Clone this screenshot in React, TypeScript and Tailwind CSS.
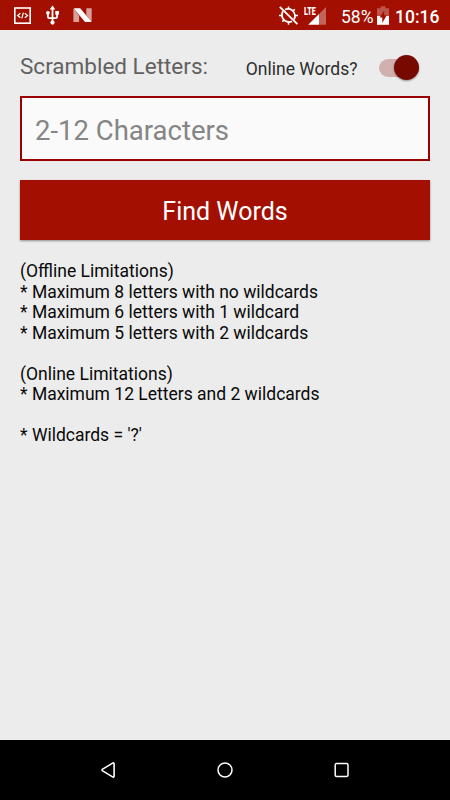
import { useState } from "react";

function StatusBar() {
  return (
    <header className="flex h-[30px] shrink-0 items-center bg-[#a31001] text-white">
      <svg className="ml-[14px] h-[30px] w-[17px]" viewBox="14 0 17 30" fill="none" stroke="currentColor">
        <rect x="14.8" y="8" width="15.4" height="15.2" strokeWidth="1.6" />
        <path d="M20.4 13.2l-2.8 2.3 2.8 2.3M24.8 13.2l2.8 2.3-2.8 2.3M23.4 12.6l-1.6 5.8" strokeWidth="1.2" />
      </svg>
      <svg className="ml-[15px] h-[30px] w-[14px]" viewBox="46 0 14 30" fill="none" stroke="currentColor" strokeWidth="1.8">
        <path d="M52.5 9v13M47.9 13v3.6q0 1.6 1.6 1.6h6q1.6 0 1.6-1.6V13" />
        <path d="M52.5 5.4l2.8 4h-5.6z" fill="currentColor" stroke="none" />
        <circle cx="52.5" cy="22.6" r="2.1" fill="currentColor" stroke="none" />
        <circle cx="47.9" cy="12.8" r="1.9" fill="currentColor" stroke="none" />
        <path d="M55.3 11h3.7v3.7h-3.7z" fill="currentColor" stroke="none" />
      </svg>
      <svg className="ml-[13px] h-[30px] w-[20px]" viewBox="73 0 20 30" fill="currentColor">
        <path d="M73.4 22V9.4q0-.6.5-.9l5.2 7.2V22zM86.3 8.2h5.4v12.6q0 .6-.4.9l-5-6.8z" opacity=".6" />
        <path d="M73.8 8.6q.3-.4 1-.4h5.4L91.4 21.4q-.3.6-1 .6H85z" />
      </svg>
      <svg className="ml-auto h-[30px] w-[21px]" viewBox="278 0 21 30" fill="none" stroke="currentColor" strokeWidth="1.8">
        <path d="M279.8 6.8l17.6 17.4" />
        <path d="M285 9.6q3.7-1.8 7 .5 2.8 2.1 3 5.4.1 2-1 4M292 21.3q-3.8 1.6-7-.5-2.9-2-3.1-5.3-.1-2.2 1-4.2" />
        <path d="M288.5 6.4v2.4M288.5 22v2.8M279 15.5h3M295 15.5h3M294.8 9.2l-1.9 1.9M282.3 21.6l1.9-1.9" strokeWidth="1.5" />
      </svg>
      <div className="relative ml-[4px] h-[30px] w-[24px]">
        <svg className="h-[30px] w-[24px]" viewBox="303 0 24 30" fill="currentColor">
          <path d="M319 14l7-7v17.7h-7z" opacity=".35" />
          <path d="M308.2 24.7H319V13.9z" />
        </svg>
        <span className="absolute left-[1px] top-[6px] origin-left scale-x-[.68] text-[10.5px] font-black leading-[11px]">LTE</span>
      </div>
      <span className="ml-[14px] w-[36px] pt-[3px] text-[17.5px] leading-[30px]">58%</span>
      <svg className="h-[30px] w-[13px]" viewBox="377 0 13 30">
        <path d="M377 8.2h3.6V6.2h4.8v2h3.6V16h-12z" fill="#bd554b" />
        <path d="M377 16h12v8.8h-12z" fill="white" />
        <path d="M384.2 10.4v4.8h2.5l-4.4 7.8v-5.6h-2.6z" fill="#a31001" />
      </svg>
      <time className="ml-[5px] w-[55px] pt-[3px] text-[17.5px] font-medium leading-[30px]">10:16</time>
    </header>
  );
}

function NavigationBar() {
  return (
    <nav className="flex h-[60px] shrink-0 items-center justify-center gap-[93px] bg-black text-white">
      <button aria-label="Back">
        <svg className="size-6" viewBox="0 0 24 24" fill="none" stroke="currentColor" strokeWidth="1.6" strokeLinejoin="round">
          <path d="M6.6 11.1l10-6q1.5-.8 1.5.9v12q0 1.7-1.5.9l-10-6q-1.2-.9 0-1.8z" />
        </svg>
      </button>
      <button aria-label="Home">
        <svg className="size-6" viewBox="0 0 24 24" fill="none" stroke="currentColor" strokeWidth="1.5">
          <circle cx="12" cy="12" r="7" />
        </svg>
      </button>
      <button aria-label="Recent apps">
        <svg className="size-6" viewBox="0 0 24 24" fill="none" stroke="currentColor" strokeWidth="1.5">
          <rect x="5.2" y="5.6" width="12.8" height="12.8" rx="1.5" />
        </svg>
      </button>
    </nav>
  );
}

export default function App() {
  const [online, setOnline] = useState(true);
  return (
    <div className="flex h-[800px] w-[450px] flex-col overflow-hidden bg-[#ececec] font-[Roboto,sans-serif]">
      <StatusBar />
      <main className="flex flex-1 flex-col px-5">
        <div className="flex h-[66px] items-center pt-[9px]">
          <label className="pb-[4px] text-[22.5px] leading-[26px] text-[#616161]" htmlFor="letters">Scrambled Letters:</label>
          <span className="ml-auto pt-[2px] text-[17.5px] leading-[24px] text-[#2c2c2c]">Online Words?</span>
          <button
            role="switch"
            aria-checked={online}
            aria-label="Online Words?"
            onClick={() => setOnline(!online)}
            className={`mr-[11px] ml-[21.5px] flex h-[18px] w-[40px] items-center rounded-full bg-[#d0b1af] ${online ? "justify-end" : "justify-start"}`}
          >
            <span className="size-[25px] shrink-0 rounded-full bg-[#760a00] shadow-[0_1px_2px_rgba(0,0,0,.4)]" />
          </button>
        </div>
        <input
          id="letters"
          placeholder="2-12 Characters"
          className="h-[65px] w-full border-2 border-[#990000] bg-[#fafafa] px-[13px] pt-[4px] text-[27.5px] text-[#333] outline-none placeholder:text-[#858585]"
        />
        <button className="mt-[19px] h-[60px] shrink-0 bg-[#a31001] pt-[4px] text-[25px] text-white shadow-[0_1px_2px_rgba(0,0,0,.4)]">
          Find Words
        </button>
        <p className="mt-[21.4px] whitespace-pre-line text-[17.5px] leading-[20.5px] text-[#090909]">
          {`(Offline Limitations)
* Maximum 8 letters with no wildcards
* Maximum 6 letters with 1 wildcard
* Maximum 5 letters with 2 wildcards

(Online Limitations)
* Maximum 12 Letters and 2 wildcards

* Wildcards = '?'`}
        </p>
      </main>
      <NavigationBar />
    </div>
  );
}
